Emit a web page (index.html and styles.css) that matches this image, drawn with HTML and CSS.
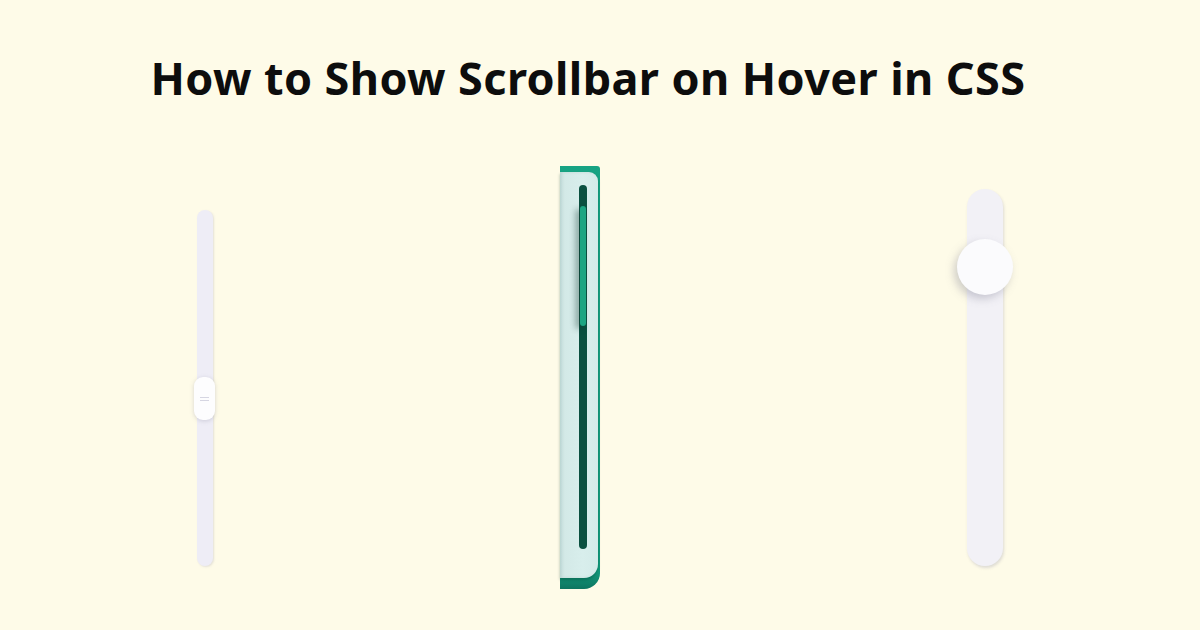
FILE: index.html
```html
<!DOCTYPE html>
<html lang="en">
<head>
<meta charset="utf-8">
<title>How to Show Scrollbar on Hover in CSS</title>
<link rel="stylesheet" href="styles.css">
</head>
<body>
<main class="page">
  <h1 class="title">How to Show Scrollbar on Hover in CSS</h1>
  <section class="demos">
    <div class="bar bar-slim">
      <div class="slim-track">
        <div class="slim-thumb"><span class="grip"></span><span class="grip"></span></div>
      </div>
    </div>
    <div class="bar bar-teal">
      <div class="teal-panel">
        <div class="teal-track">
          <div class="teal-thumb"></div>
        </div>
      </div>
    </div>
    <div class="bar bar-round">
      <div class="round-track">
        <div class="round-thumb"></div>
      </div>
    </div>
  </section>
</main>
</body>
</html>
```

FILE: styles.css
```css
* { box-sizing: border-box; }

html, body {
  margin: 0;
  width: 1200px;
  height: 630px;
  overflow: hidden;
  background: #fefbe8;
}

.page {
  display: flex;
  flex-direction: column;
  height: 630px;
}

.title {
  margin: 48px 0 0;
  padding-right: 24px;
  text-align: center;
  font-family: "Noto Sans", "Open Sans", sans-serif;
  font-weight: 700;
  font-size: 45px;
  line-height: 60px;
  color: #0d0d0d;
  letter-spacing: 0.4px;
  white-space: nowrap;
}

.demos {
  display: flex;
  align-items: flex-start;
  padding-left: 194px;
}

/* slim lavender scrollbar with pill thumb */
.bar-slim {
  width: 21px;
  margin-top: 102px;
  display: flex;
  justify-content: center;
}

.slim-track {
  position: relative;
  width: 16px;
  height: 356px;
  border-radius: 8px;
  background: #eeedf6;
  box-shadow: 1px 1px 2px rgba(150, 150, 170, 0.25);
}

.slim-thumb {
  position: absolute;
  left: -3px;
  top: 167px;
  width: 21px;
  height: 43px;
  border-radius: 9px;
  background: #fdfdfe;
  box-shadow: 0 1px 4px rgba(140, 140, 160, 0.35);
  display: flex;
  flex-direction: column;
  align-items: center;
  justify-content: center;
  gap: 2px;
}

.grip {
  width: 9px;
  height: 1px;
  background: #d6d6e2;
}

/* teal scrollbar */
.bar-teal {
  width: 40px;
  height: 423px;
  margin-left: 345px;
  margin-top: 58px;
  padding-top: 6px;
  padding-bottom: 11px;
  border-radius: 0 3px 16px 0;
  background: linear-gradient(180deg, #17a383 0%, #129a7b 96%, #0d7560 100%);
}

.teal-panel {
  width: 38px;
  height: 100%;
  border-radius: 0 9px 14px 0;
  background: linear-gradient(90deg, #d2e8e6 0%, #d8eeec 60%, #d4ebe9 100%);
  box-shadow: inset 2px 0 3px rgba(120, 160, 155, 0.25), 0 2px 3px rgba(0, 60, 45, 0.35);
  padding: 13px 0 0 19px;
}

.teal-track {
  position: relative;
  width: 8px;
  height: 364px;
  border-radius: 4px;
  background: #0a5040;
}

.teal-thumb {
  position: absolute;
  left: 1px;
  top: 21px;
  width: 6px;
  height: 120px;
  border-radius: 3px;
  background: #1ca582;
  box-shadow: -4px 3px 6px rgba(10, 50, 40, 0.45);
}

/* wide rounded scrollbar with circular thumb */
.bar-round {
  width: 56px;
  margin-left: 357px;
  margin-top: 81px;
  display: flex;
  justify-content: center;
}

.round-track {
  position: relative;
  width: 36px;
  height: 377px;
  border-radius: 18px;
  background: #f2f1f6;
  box-shadow: 1px 2px 3px rgba(150, 150, 170, 0.3);
}

.round-thumb {
  position: absolute;
  left: -10px;
  top: 50px;
  width: 56px;
  height: 56px;
  border-radius: 50%;
  background: #fbfbfd;
  box-shadow: -3px 4px 8px rgba(120, 120, 140, 0.35);
}
```
